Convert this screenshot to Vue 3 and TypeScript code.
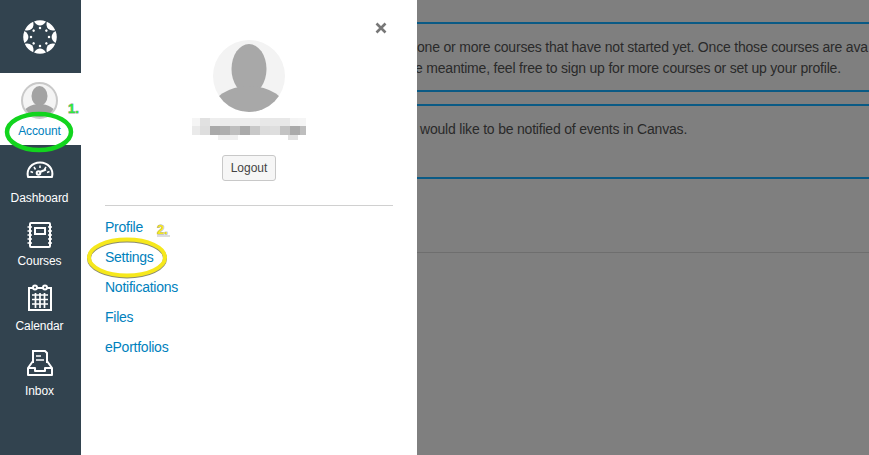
<script setup lang="ts">
interface NavItem {
  label: string
  icon: string
}

const navItems: NavItem[] = [
  { label: 'Dashboard', icon: 'dashboard' },
  { label: 'Courses', icon: 'courses' },
  { label: 'Calendar', icon: 'calendar' },
  { label: 'Inbox', icon: 'inbox' },
]

const links = ['Profile', 'Settings', 'Notifications', 'Files', 'ePortfolios']

const angles = [0, 45, 90, 135, 180, 225, 270, 315]

// pixelated user name: [x, y, w, h, grey]
const nameCells: number[][] = [
  [0, 0, 114, 8, 245],
  [0, 8, 114, 9, 238],
  [8, 0, 10, 8, 225],
  [18, 0, 10, 8, 238],
  [28, 0, 40, 8, 236],
  [68, 0, 30, 8, 232],
  [98, 0, 8, 8, 244],
  [0, 8, 8, 9, 234],
  [8, 8, 10, 9, 222],
  [18, 8, 10, 9, 170],
  [28, 8, 10, 9, 175],
  [38, 8, 10, 9, 190],
  [48, 8, 10, 9, 170],
  [58, 8, 10, 9, 200],
  [68, 8, 10, 9, 220],
  [78, 8, 10, 9, 222],
  [88, 8, 10, 9, 195],
  [98, 8, 10, 9, 170],
  [108, 8, 6, 9, 190],
  [26, 17, 20, 5, 240],
  [96, 17, 10, 5, 225],
]
</script>

<template>
  <div class="page">
    <nav class="sidebar">
      <div class="logo">
        <svg width="36" height="36" viewBox="-18 -18 36 36">
          <g v-for="a in angles" :key="a" :transform="`rotate(${a})`" fill="#fff">
            <path d="M-6 -15.6 Q0 -18 6 -15.6 Q3.4 -11.6 0 -11.6 Q-3.4 -11.6 -6 -15.6 Z" />
            <circle cx="0" cy="-9" r="1.25" />
          </g>
        </svg>
      </div>
      <div class="nav-item active">
        <svg class="mini-avatar" width="37" height="37" viewBox="0 0 37 37">
          <defs>
            <clipPath id="miniClip"><circle cx="18.5" cy="18.5" r="16.5" /></clipPath>
          </defs>
          <circle cx="18.5" cy="18.5" r="17.5" fill="#f4f4f4" stroke="#c9c9c9" stroke-width="2" />
          <g clip-path="url(#miniClip)" fill="#a3a3a3">
            <ellipse cx="18.5" cy="14" rx="8" ry="10" />
            <ellipse cx="18.5" cy="32" rx="16" ry="10" />
          </g>
        </svg>
        <span class="nav-label">Account</span>
      </div>
      <div v-for="item in navItems" :key="item.label" class="nav-item" :class="item.icon">
        <svg class="nav-icon" width="30" height="30" viewBox="0 0 30 30" fill="none" stroke="#fff" stroke-width="2">
          <template v-if="item.icon === 'dashboard'">
            <path d="M3 20 C1 12 7 5.5 15 5.5 C23 5.5 29 12 27 20 Z" stroke-linejoin="round" />
            <path d="M15 8.5 V11 M9 10 L10.5 12.5 M5.5 14.5 L8 15.5 M21 10 L19.5 12.5 M24.5 14.5 L22 15.5" stroke-width="1.5" />
            <circle cx="13.5" cy="16" r="1.8" />
            <path d="M15 15 L21 12.5" />
          </template>
          <template v-else-if="item.icon === 'courses'">
            <rect x="5" y="3" width="20" height="24" rx="1" />
            <rect x="10" y="8" width="10" height="6" />
            <path d="M2.5 7 H7 M2.5 11 H7 M2.5 15 H7 M2.5 19 H7 M2.5 23 H7 M23 7 H27 M23 11 H27 M23 15 H27 M23 19 H27 M23 23 H27" stroke-width="1.6" />
          </template>
          <template v-else-if="item.icon === 'calendar'">
            <path d="M8 5 H4 V27 H26 V5 H22 M12 5 H18" />
            <circle cx="10" cy="4.5" r="2" />
            <circle cx="20" cy="4.5" r="2" />
            <path d="M7 12 H23 M7 16.5 H23 M7 21 H23 M10.5 10 V25 M15 10 V25 M19.5 10 V25" stroke-width="1.7" />
          </template>
          <template v-else>
            <path d="M8 15 V3 H20 L22 5 V15" />
            <path d="M11 8 H16 M11 12 H19" stroke-width="1.6" />
            <path d="M8 13 L3 20 V27 H27 V20 L22 13" stroke-linejoin="round" />
            <path d="M3 20 H10 V23 H20 V20 H27" stroke-linejoin="round" />
          </template>
        </svg>
        <span class="nav-label">{{ item.label }}</span>
      </div>
    </nav>

    <aside class="tray">
      <svg class="close" width="12" height="12" viewBox="0 0 12 12">
        <path d="M1.5 1.5 L10.5 10.5 M10.5 1.5 L1.5 10.5" stroke="#777" stroke-width="2.6" />
      </svg>
      <div class="profile">
        <svg width="72" height="72" viewBox="0 0 72 72">
          <defs>
            <clipPath id="bigClip"><circle cx="36" cy="36" r="36" /></clipPath>
          </defs>
          <circle cx="36" cy="36" r="36" fill="#f3f3f3" />
          <g clip-path="url(#bigClip)" fill="#a8a8a8">
            <ellipse cx="36" cy="29" rx="17.5" ry="25" />
            <ellipse cx="36" cy="72" rx="38" ry="26" />
          </g>
        </svg>
        <svg class="blurred-name" width="114" height="22" viewBox="0 0 114 22">
          <rect
            v-for="(c, i) in nameCells"
            :key="i"
            :x="c[0]"
            :y="c[1]"
            :width="c[2]"
            :height="c[3]"
            :fill="`rgb(${c[4]},${c[4]},${c[4]})`"
          />
        </svg>
        <button class="logout">Logout</button>
      </div>
      <ul class="links">
        <li v-for="link in links" :key="link">{{ link }}</li>
      </ul>
    </aside>

    <main class="content">
      <section class="notice first">
        <p class="line-one">one or more courses that have not started yet. Once those courses are ava</p>
        <p class="line-two">e meantime, feel free to sign up for more courses or set up your profile.</p>
      </section>
      <section class="notice second">
        <p class="line-three">would like to be notified of events in Canvas.</p>
      </section>
      <div class="rule" />
    </main>

    <svg class="marks" width="869" height="455" viewBox="0 0 869 455">
      <ellipse cx="39" cy="132" rx="32" ry="18" fill="none" stroke="#12d41e" stroke-width="4.5" />
      <ellipse cx="127" cy="258.5" rx="38" ry="18" fill="none" stroke="#8a8a70" stroke-width="4" />
      <ellipse cx="127" cy="257.5" rx="38" ry="18" fill="none" stroke="#f6e81c" stroke-width="4" />
      <text x="68" y="113" class="mark-text green">1.</text>
      <text x="157" y="234" class="mark-text yellow">2.</text>
      <path d="M157 236 H170" stroke="#bbb" stroke-width="1" />
    </svg>
  </div>
</template>

<style>
html,
body {
  margin: 0;
  overflow: hidden;
}
</style>

<style scoped>
.page {
  position: relative;
  display: flex;
  width: 869px;
  height: 455px;
  overflow: hidden;
  background: #7f7f7f;
  font-family: "Liberation Sans", Arial, sans-serif;
}

.sidebar {
  width: 81px;
  flex-shrink: 0;
  background: #32434f;
  display: flex;
  flex-direction: column;
  align-items: stretch;
}

.logo {
  height: 73px;
  display: flex;
  align-items: center;
  justify-content: center;
  padding-right: 2px;
  box-sizing: border-box;
}

.nav-item {
  display: flex;
  flex-direction: column;
  align-items: center;
  padding-right: 2px;
  color: #fff;
}

.nav-item.active {
  height: 72px;
  background: #fff;
  color: #0081bd;
  padding-top: 9px;
  box-sizing: border-box;
}

.nav-label {
  font-size: 12px;
  line-height: 16px;
  letter-spacing: -0.1px;
}

.active .nav-label {
  margin-top: 4px;
}

.dashboard .nav-icon {
  margin-top: 12px;
}

.dashboard .nav-label {
  margin-top: 3px;
}

.courses .nav-icon {
  margin-top: 14px;
}

.courses .nav-label {
  margin-top: 3px;
}

.calendar .nav-icon {
  margin-top: 14px;
}

.calendar .nav-label {
  margin-top: 5px;
}

.inbox .nav-icon {
  margin-top: 14px;
}

.inbox .nav-label {
  margin-top: 5px;
}

.tray {
  position: relative;
  width: 336px;
  flex-shrink: 0;
  box-sizing: border-box;
  background: #fff;
  padding: 40px 24px 0;
}

.close {
  position: absolute;
  top: 22px;
  left: 294px;
}

.profile {
  display: flex;
  flex-direction: column;
  align-items: center;
  height: 165px;
  border-bottom: 1px solid #d0d0d0;
  box-sizing: content-box;
}

.blurred-name {
  margin-top: 6px;
}

.logout {
  margin-top: 15px;
  width: 54px;
  height: 26px;
  padding: 0;
  border: 1px solid #c8c8c8;
  border-radius: 3px;
  background: #f6f6f6;
  color: #444;
  font: 12px "Liberation Sans", Arial, sans-serif;
}

.links {
  list-style: none;
  margin: 6px 0 0;
  padding: 0;
}

.links li {
  height: 30px;
  line-height: 30px;
  font-size: 14px;
  letter-spacing: -0.25px;
  color: #0081bd;
}

.content {
  flex: 1;
  min-width: 0;
  overflow: hidden;
  padding-top: 22px;
}

.notice {
  border-top: 2px solid #0a5a85;
  border-bottom: 2px solid #0a5a85;
  box-sizing: border-box;
}

.notice p {
  margin: 0;
  white-space: nowrap;
  font-size: 14px;
  line-height: 21px;
  letter-spacing: -0.2px;
  color: #2a2a2a;
}

.first {
  height: 70px;
  padding-top: 13px;
}

.second {
  margin-top: 12px;
  height: 75px;
  padding-top: 13px;
}

.notice .line-two {
  margin-left: -2px;
}

.notice .line-three {
  margin-left: 3px;
}

.rule {
  margin-top: 73px;
  height: 1px;
  background: #6e6e6e;
}

.marks {
  position: absolute;
  left: 0;
  top: 0;
  pointer-events: none;
}

.mark-text {
  font-size: 13px;
  font-weight: bold;
  font-family: "Liberation Sans", Arial, sans-serif;
  paint-order: stroke;
  stroke: #999;
  stroke-width: 0.8px;
}

.green {
  fill: #2ee83a;
}

.yellow {
  fill: #f6e81c;
}
</style>
